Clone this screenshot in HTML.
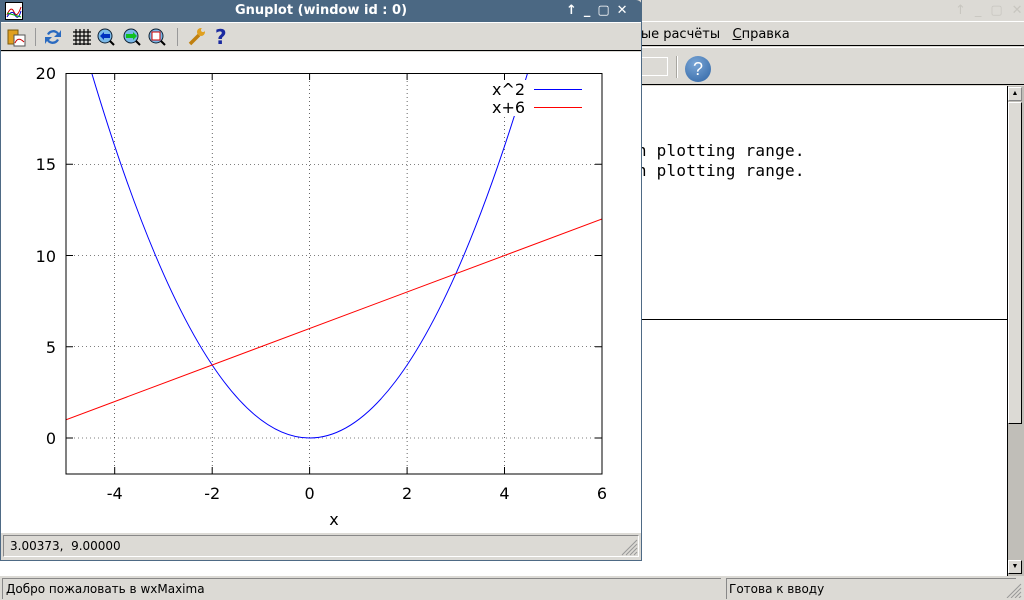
<!DOCTYPE html>
<html><head><meta charset="utf-8"><style>
*{margin:0;padding:0;box-sizing:border-box}
body{width:1024px;height:600px;overflow:hidden;background:#dcdad5;font-family:"Liberation Sans","DejaVu Sans",sans-serif;position:relative}
.abs{position:absolute}
.sans{font-family:"DejaVu Sans","Liberation Sans",sans-serif}
</style></head><body>
<!-- main wxMaxima window -->
<div class="abs" style="left:0;top:0;width:1024px;height:22px;background:#dcdad5;border-bottom:1px solid #fff"></div>
<div class="abs sans" style="left:955px;top:3px;color:#c8c6c0;font-size:13px;letter-spacing:9px">↑_▢✕</div>
<div class="abs" style="left:0;top:23px;width:1024px;height:23px;background:#dcdad5;border-bottom:1px solid #000"></div>
<div class="abs sans" style="left:583px;top:27px;font-size:13px;color:#000">Численные расчёты&nbsp;&nbsp;&nbsp;<u>С</u>правка</div>
<div class="abs" style="left:0;top:47px;width:1024px;height:38px;background:#dcdad5;border-top:1px solid #fff;border-bottom:1px solid #000"></div>
<div class="abs" style="left:600px;top:57px;width:68px;height:19px;border:1px solid #fff;border-left:none"></div>
<div class="abs" style="left:676px;top:56px;width:2px;height:22px;border-left:1px solid #a8a6a0;border-right:1px solid #fff"></div>
<div class="abs" style="left:685px;top:56px;width:26px;height:26px;border-radius:50%;background:radial-gradient(circle at 40% 30%,#7aa6d6,#2f64a4);color:#fff;font-size:18px;text-align:center;line-height:26px">?</div>
<div class="abs" style="left:0;top:86px;width:1008px;height:490px;background:#fff"></div>
<div class="abs" style="left:627px;top:141px;font-family:'DejaVu Sans Mono','Liberation Mono',monospace;font-size:16px;letter-spacing:0.24px;line-height:20px;color:#000">in plotting range.<br>in plotting range.</div>
<div class="abs" style="left:600px;top:319px;width:408px;height:1px;background:#000"></div>
<!-- scrollbar -->
<div class="abs" style="left:1007px;top:86px;width:17px;height:490px;background:#c0beb8;border-left:1px solid #000"></div>
<div class="abs" style="left:1008px;top:87px;width:14px;height:14px;background:#dcdad5;border:1px solid #fff;border-right-color:#888;border-bottom-color:#888;font-size:7px;text-align:center;line-height:12px">▲</div>
<div class="abs" style="left:1008px;top:102px;width:14px;height:322px;background:#dcdad5;border:1px solid #fff;border-right-color:#000;border-bottom-color:#000"></div>
<div class="abs" style="left:1008px;top:560px;width:14px;height:14px;background:#dcdad5;border:1px solid #fff;border-right-color:#000;border-bottom-color:#000;font-size:7px;text-align:center;line-height:12px">▼</div>
<!-- status -->
<div class="abs" style="left:0;top:576px;width:1024px;height:24px;background:#dcdad5"></div>
<div class="abs sans" style="left:2px;top:578px;width:719px;height:21px;border-left:1px solid #888;border-top:1px solid #888;font-size:12px;padding:3px 0 0 3px">Добро пожаловать в wxMaxima</div>
<div class="abs sans" style="left:726px;top:578px;width:290px;height:21px;border-left:1px solid #888;border-top:1px solid #888;font-size:12px;padding:3px 0 0 2px">Готова к вводу</div>
<svg class="abs" style="left:1004px;top:582px" width="18" height="16"><path d="M17 2L3 16M17 6L7 16M17 10L11 16M17 14L15 16" stroke="#999" stroke-width="1"/></svg>

<!-- gnuplot window -->
<div class="abs" style="left:0;top:0;width:642px;height:561px;background:#dcdad5;border:1px solid #4e6a85;border-top:none"></div>
<div class="abs" style="left:0;top:0;width:642px;height:22px;background:#4b6883;border-radius:0 6px 0 0"></div>
<div class="abs" style="left:5px;top:2px;width:18px;height:18px;background:#fff;border:1px solid #000"><svg width="16" height="16"><path d="M1 12Q5 2 8 9T15 4" stroke="#c00" fill="none"/><path d="M1 14Q6 6 9 12T15 8" stroke="#00c" fill="none"/><path d="M1 10L15 14" stroke="#0a0" fill="none"/></svg></div>
<div class="abs sans" style="left:0;top:3px;width:642px;text-align:center;color:#fff;font-weight:bold;font-size:13px">Gnuplot (window id : 0)</div>
<div class="abs sans" style="left:566px;top:3px;color:#fff;font-size:13px;font-weight:bold;letter-spacing:7px">↑_▢✕</div>
<div class="abs" style="left:1px;top:22px;width:640px;height:29px;background:#dcdad5;border-top:1px solid #fff;border-bottom:1px solid #000"></div>
<svg class="abs" style="left:6px;top:26px" width="230" height="22">
<rect x="2" y="4" width="10" height="14" fill="#e0a020" stroke="#7a5a10"/><rect x="8" y="9" width="11" height="11" fill="#fff" stroke="#555"/><path d="M9 17Q12 10 18 16" stroke="#c00" fill="none"/>
<rect x="29" y="2" width="1" height="18" fill="#999"/>
<path d="M41 8A7 7 0 0 1 53 7L55 4V11H48L51 8A5 5 0 0 0 43 9Z M53 14A7 7 0 0 1 41 15L39 18V11H46L43 14A5 5 0 0 0 51 13Z" fill="#2a6ac0"/>
<path d="M70 3V19M74 3V19M78 3V19M82 3V19M67 6H85M67 10H85M67 14H85M67 18H85" stroke="#000" stroke-width="1.2"/>
<circle cx="99" cy="10" r="7" fill="#7ab8e8" stroke="#123"/><path d="M94 10L98 6V8H104V12H98V14Z" fill="#0030c0"/><path d="M104 15L108 19" stroke="#000" stroke-width="2"/>
<circle cx="125" cy="10" r="7" fill="#7ab8e8" stroke="#123"/><path d="M131 10L127 6V8H120V12H127V14Z" fill="#10c020"/><path d="M130 15L134 19" stroke="#000" stroke-width="2"/>
<circle cx="150" cy="10" r="7" fill="#7ab8e8" stroke="#123"/><rect x="146" y="6" width="8" height="8" fill="#fff" stroke="#c00"/><path d="M155 15L159 19" stroke="#000" stroke-width="2"/>
<rect x="171" y="2" width="1" height="18" fill="#999"/>
<path d="M184 18L193 9" stroke="#c08010" stroke-width="3.5"/><circle cx="195" cy="6" r="4" fill="#e0a020"/><circle cx="197" cy="4" r="2" fill="#dcdad5"/>
<text x="209" y="18" font-size="20" font-weight="bold" fill="#1a2aa0" font-family="DejaVu Sans">?</text>
</svg>
<div class="abs" style="left:1px;top:52px;width:640px;height:481px;background:#fff"></div>
<svg class="abs sans" style="left:0;top:0" width="642" height="540" font-family="DejaVu Sans,Liberation Sans,sans-serif" font-size="16">
<defs><clipPath id="c"><rect x="66" y="73" width="536" height="401"/></clipPath></defs>
<g stroke="#000" stroke-width="0.6" stroke-dasharray="1,3">
<path d="M114.7 73V474M212.2 73V474M309.6 73V474M407.1 73V474M504.5 73V474"/>
<path d="M66 438H602M66 346.75H602M66 255.5H602M66 164.25H602"/>
</g>
<g stroke="#000" stroke-width="1">
<path d="M114.7 474v-7M212.2 474v-7M309.6 474v-7M407.1 474v-7M504.5 474v-7M114.7 73v7M212.2 73v7M309.6 73v7M407.1 73v7M504.5 73v7"/>
<path d="M66 438h7M66 346.75h7M66 255.5h7M66 164.25h7M602 438h-7M602 346.75h-7M602 255.5h-7M602 164.25h-7"/>
</g>
<g clip-path="url(#c)" fill="none">
<path d="M91.7 73Q309.6 803 527.6 73" stroke="#0000ff" stroke-width="1"/>
<path d="M66 419.75L602 219" stroke="#ff0000" stroke-width="1"/>
</g>
<rect x="66" y="73.5" width="536" height="400.5" fill="none" stroke="#000" stroke-width="1"/>
<rect x="486" y="80" width="40" height="36" fill="#fff"/>
<text x="492" y="95">x^2</text><text x="492" y="113">x+6</text>
<path d="M534 89.5H582" stroke="#0000ff"/><path d="M534 107.5H582" stroke="#ff0000"/>
<g text-anchor="end"><text x="56" y="444">0</text><text x="56" y="353">5</text><text x="56" y="262">10</text><text x="56" y="170">15</text><text x="56" y="79">20</text></g>
<g text-anchor="middle"><text x="114.7" y="499">-4</text><text x="212.2" y="499">-2</text><text x="309.6" y="499">0</text><text x="407.1" y="499">2</text><text x="504.5" y="499">4</text><text x="602" y="499">6</text><text x="334" y="525">x</text></g>
</svg>
<div class="abs sans" style="left:3px;top:535px;width:636px;height:22px;border:1px solid #888;border-right-color:#fff;border-bottom-color:#fff;font-size:12px;padding:3px 0 0 6px">3.00373,&nbsp; 9.00000</div>
<svg class="abs" style="left:620px;top:538px" width="18" height="18"><path d="M17 2L2 17M17 6L6 17M17 10L10 17M17 14L14 17" stroke="#999"/></svg>
</body></html>
